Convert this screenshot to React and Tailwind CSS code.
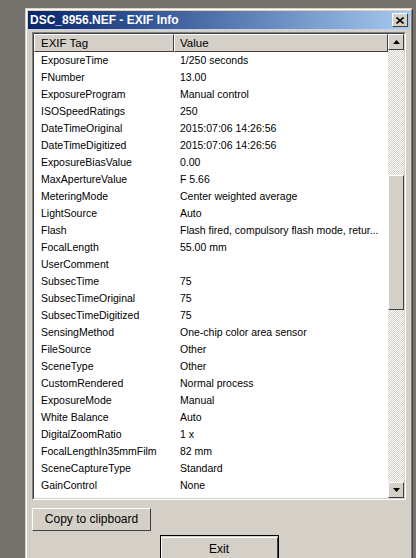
import React from 'react';

const rows = [
  ['ExposureTime', '1/250 seconds'],
  ['FNumber', '13.00'],
  ['ExposureProgram', 'Manual control'],
  ['ISOSpeedRatings', '250'],
  ['DateTimeOriginal', '2015:07:06 14:26:56'],
  ['DateTimeDigitized', '2015:07:06 14:26:56'],
  ['ExposureBiasValue', '0.00'],
  ['MaxApertureValue', 'F 5.66'],
  ['MeteringMode', 'Center weighted average'],
  ['LightSource', 'Auto'],
  ['Flash', 'Flash fired, compulsory flash mode, retur...'],
  ['FocalLength', '55.00 mm'],
  ['UserComment', ''],
  ['SubsecTime', '75'],
  ['SubsecTimeOriginal', '75'],
  ['SubsecTimeDigitized', '75'],
  ['SensingMethod', 'One-chip color area sensor'],
  ['FileSource', 'Other'],
  ['SceneType', 'Other'],
  ['CustomRendered', 'Normal process'],
  ['ExposureMode', 'Manual'],
  ['White Balance', 'Auto'],
  ['DigitalZoomRatio', '1 x'],
  ['FocalLengthIn35mmFilm', '82 mm'],
  ['SceneCaptureType', 'Standard'],
  ['GainControl', 'None'],
  ['Contrast', 'Soft'],
];

const font = { fontFamily: '"Liberation Sans", Arial, sans-serif' };

// classic raised 3d edge
const raised =
  'border-t border-l border-t-white border-l-white border-b border-r border-b-[#404040] border-r-[#404040]';

function ArrowButton({ down }) {
  return (
    <div className={`h-[16px] w-[16px] shrink-0 bg-[#d4d0c8] ${raised} flex items-center justify-center`}>
      <svg width="7" height="4" viewBox="0 0 7 4">
        {down ? <path d="M0 0h7L3.5 4z" fill="#000" /> : <path d="M0 4h7L3.5 0z" fill="#000" />}
      </svg>
    </div>
  );
}

export default function App() {
  return (
    <div className="h-[558px] w-[416px] overflow-hidden bg-[#75716d] pl-[25px] pt-[8px] pr-[3px]" style={font}>
      <div className="h-[560px] border border-t-[#d4d0c8] border-l-[#d4d0c8] border-r-[#404040] border-b-[#404040] bg-[#d4d0c8]">
        <div className="h-full border border-t-white border-l-white border-r-[#808080] border-b-[#808080] p-[1px]">
          {/* title bar */}
          <div className="flex h-[18px] items-center justify-between bg-gradient-to-r from-[#0a246a] to-[#a6caf0] pl-[2px] pr-[2px]">
            <span className="text-[12px] font-bold leading-none text-white">
              DSC_8956.NEF - EXIF Info
            </span>
            <div className={`flex h-[14px] w-[16px] items-center justify-center bg-[#d4d0c8] ${raised}`}>
              <svg width="8" height="7" viewBox="0 0 8 7">
                <path d="M0.5 0.5l7 6M7.5 0.5l-7 6" stroke="#000" strokeWidth="1.6" />
              </svg>
            </div>
          </div>

          <div className="px-[4px] pt-[3px]">
            {/* list view */}
            <div className="h-[468px] border border-t-[#808080] border-l-[#808080] border-b-white border-r-white">
              <div className="flex h-full border border-t-[#404040] border-l-[#404040] border-b-[#d4d0c8] border-r-[#d4d0c8] bg-white">
                <div className="min-w-0 flex-1 overflow-hidden text-black">
                  <div className="flex h-[18px] bg-[#d4d0c8] text-[11.5px] leading-[16px]">
                    <div className={`w-[140px] shrink-0 ${raised} pl-[6px]`}>EXIF Tag</div>
                    <div className={`flex-1 ${raised} pl-[5px]`}>Value</div>
                  </div>
                  {rows.map(([tag, value]) => (
                    <div key={tag} className="flex h-[17px] items-center text-[10.5px] whitespace-nowrap">
                      <div className="w-[140px] shrink-0 pl-[7px]">{tag}</div>
                      <div className="min-w-0 flex-1 overflow-hidden pl-[6px]">{value}</div>
                    </div>
                  ))}
                </div>
                {/* vertical scrollbar */}
                <div className="flex w-[16px] shrink-0 flex-col bg-[image:repeating-conic-gradient(#d4d0c8_0_25%,#ffffff_0_50%)] bg-[length:2px_2px]">
                  <ArrowButton />
                  <div className="h-[125px] shrink-0" />
                  <div className={`h-[135px] shrink-0 bg-[#d4d0c8] ${raised}`} />
                  <div className="flex-1" />
                  <ArrowButton down />
                </div>
              </div>
            </div>

            {/* buttons */}
            <div className="pt-[6px]">
              <button className={`h-[23px] w-[119px] bg-[#d4d0c8] ${raised} text-[12px] text-black`}>
                Copy to clipboard
              </button>
            </div>
            <div className="flex justify-center pt-[4px]">
              <div className="border border-black">
                <button className={`h-[23px] w-[117px] bg-[#d4d0c8] ${raised} text-[12px] text-black`}>
                  Exit
                </button>
              </div>
            </div>
          </div>
        </div>
      </div>
    </div>
  );
}
